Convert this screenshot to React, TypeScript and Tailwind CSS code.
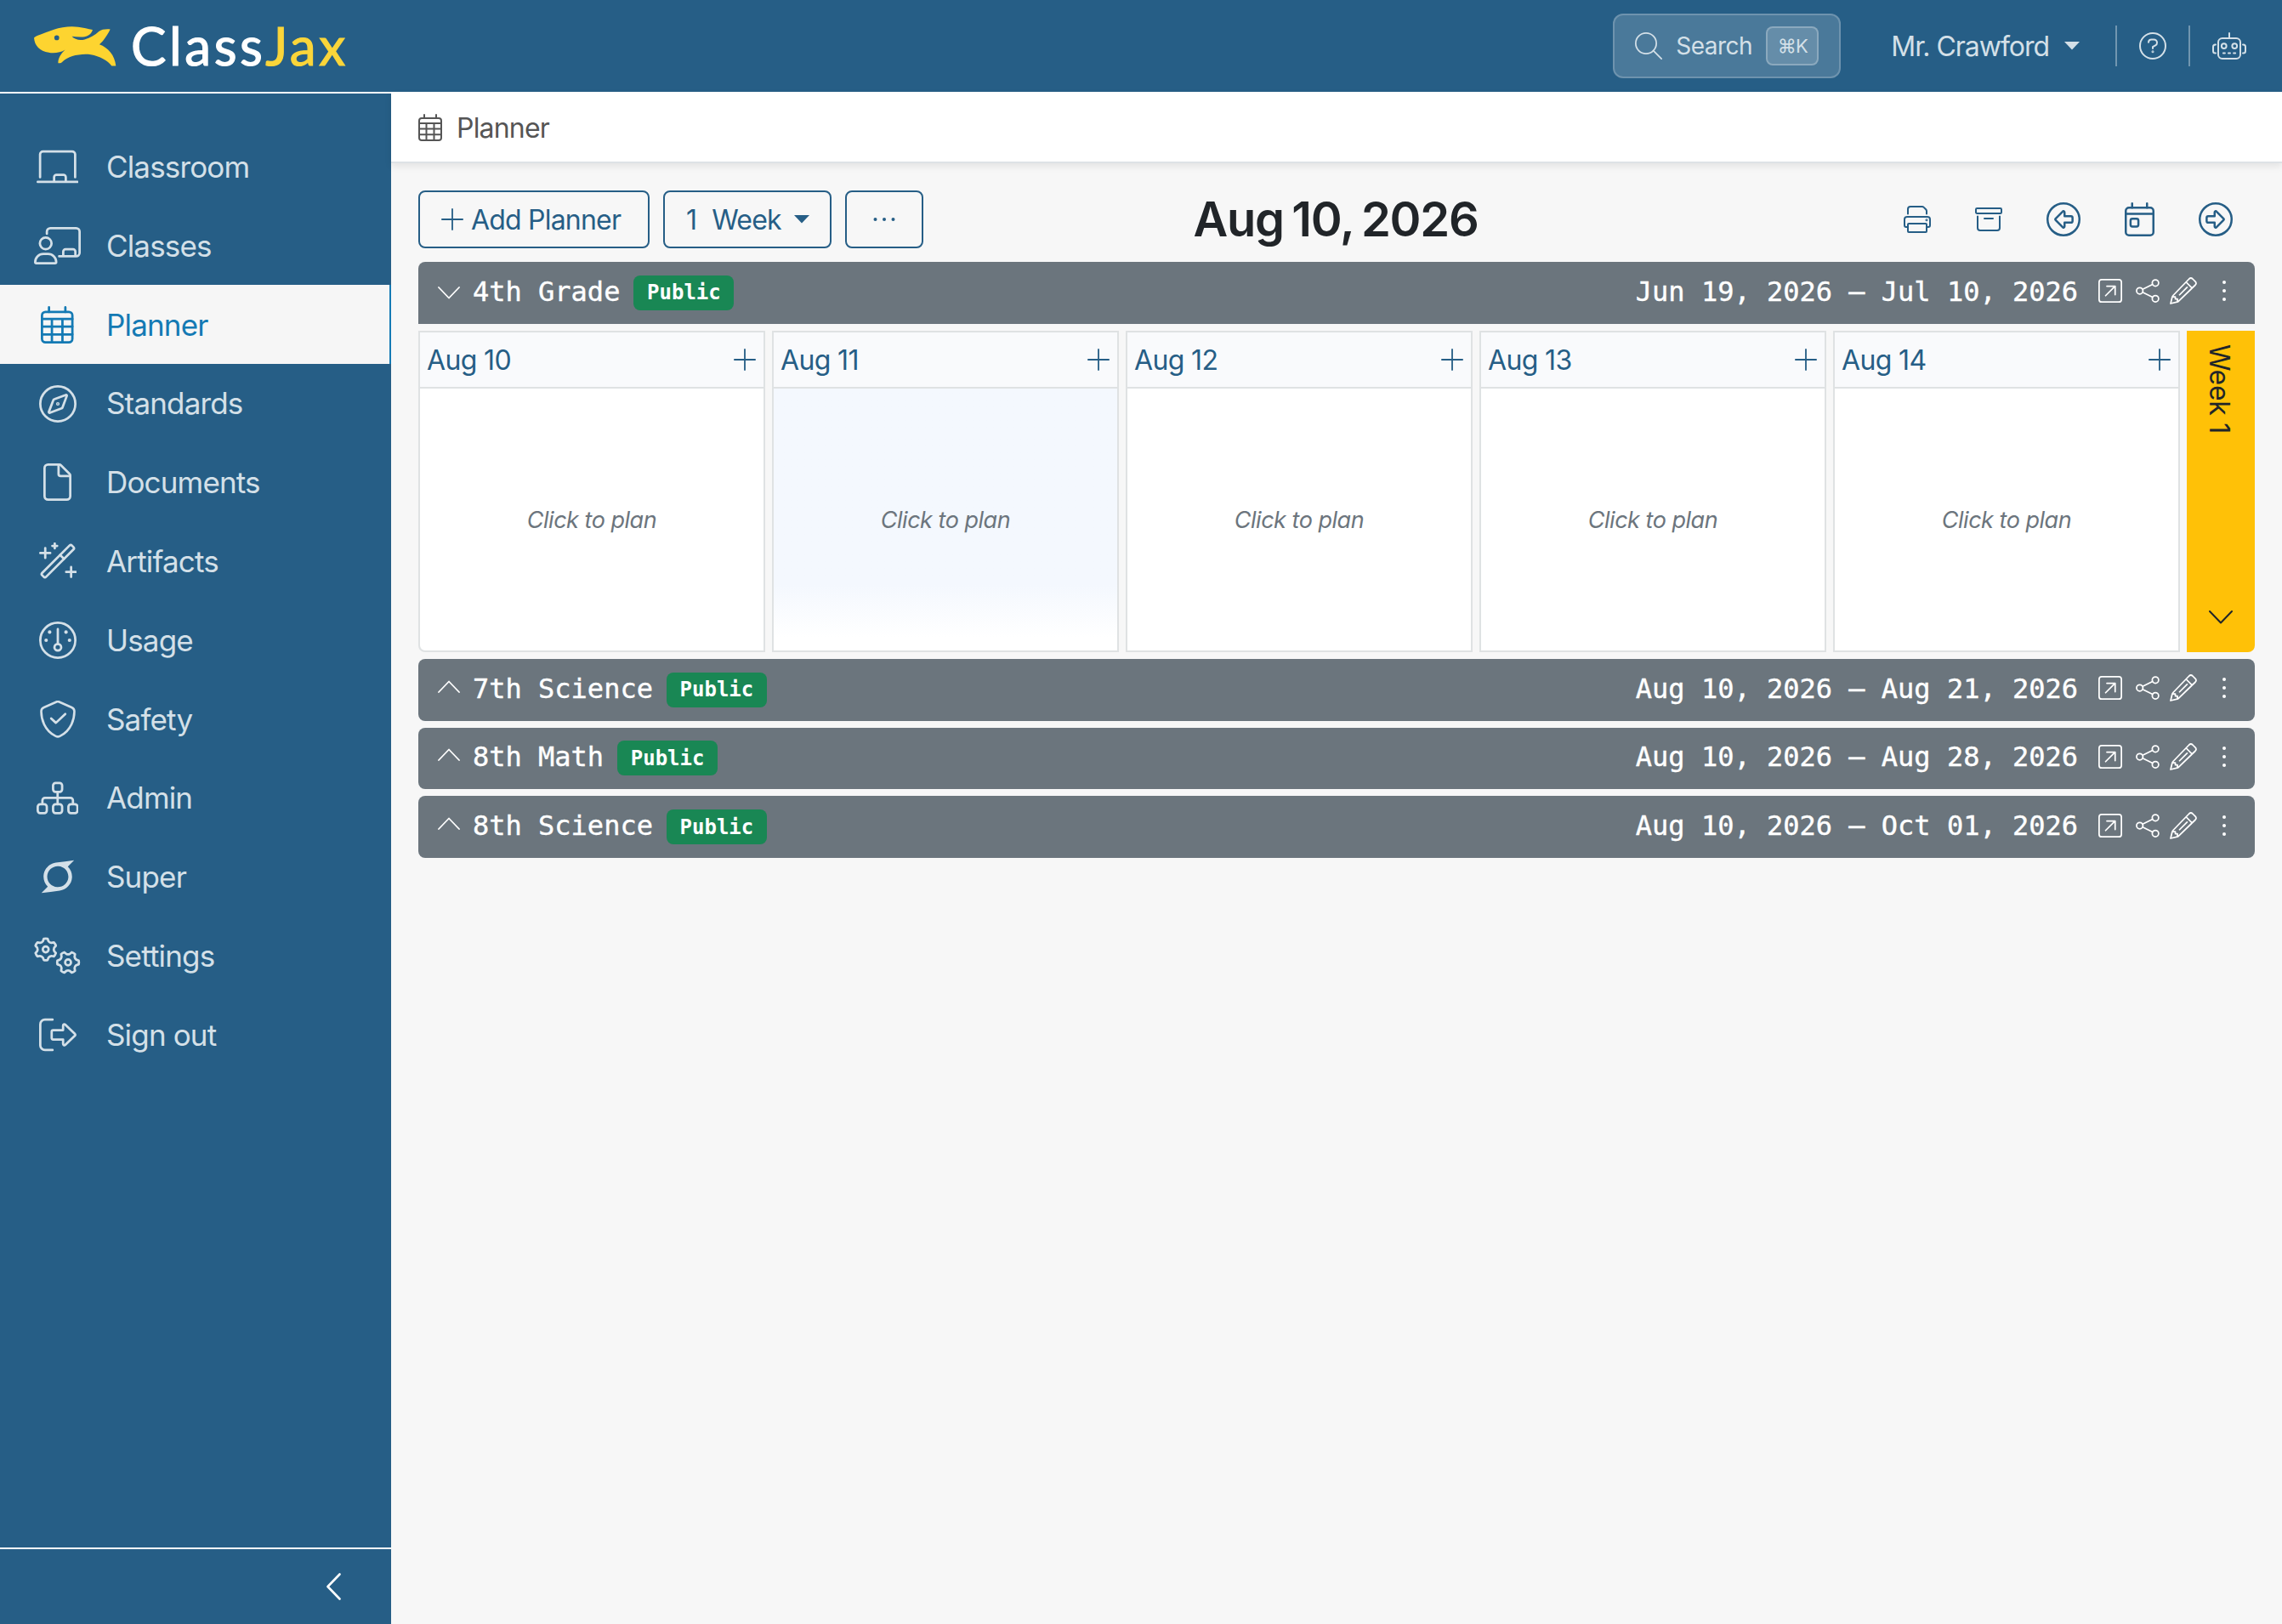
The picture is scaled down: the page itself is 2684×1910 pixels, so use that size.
import type { ReactNode } from "react";
import { FaSuperpowers } from "react-icons/fa";

type IconProps = {
  w?: number;
  h?: number;
  stroke?: number;
  className?: string;
  children: ReactNode;
};

function Icon({ w = 512, h = 512, stroke = 32, className, children }: IconProps) {
  return (
    <svg
      viewBox={`0 0 ${w} ${h}`}
      className={className}
      fill="none"
      stroke="currentColor"
      strokeWidth={stroke}
      strokeLinecap="round"
      strokeLinejoin="round"
    >
      {children}
    </svg>
  );
}

// six toothed gear outline around cx, cy
function gearPath(cx: number, cy: number, start: number) {
  const at = (r: number, deg: number) => {
    const a = (deg * Math.PI) / 180;
    return `${(cx + r * Math.cos(a)).toFixed(1)} ${(cy + r * Math.sin(a)).toFixed(1)}`;
  };
  let d = "";
  for (let i = 0; i < 6; i++) {
    const a = start + i * 60;
    d += `${i === 0 ? "M" : "L"}${at(148, a - 10)}`;
    d += `Q${at(152, a)} ${at(148, a + 10)}`;
    d += `L${at(118, a + 19)}`;
    d += `Q${at(106, a + 30)} ${at(118, a + 41)}`;
  }
  return d + "Z";
}

const CalendarDays = ({ className }: { className: string }) => (
  <Icon w={448} className={className}>
    <rect x="16" y="80" width="416" height="416" rx="48" />
    <path d="M112 16V80M336 16V80M16 176H432M16 280H432M16 388H432M152 176V496M296 176V496" />
  </Icon>
);

const Plus = ({ className }: { className: string }) => (
  <Icon w={400} h={400} stroke={28} className={className}>
    <path d="M200 14V386M14 200H386" />
  </Icon>
);

const Caret = ({ className }: { className: string }) => (
  <svg viewBox="0 0 18 10" className={className} fill="currentColor">
    <path d="M0 0H18L9 9.5Z" />
  </svg>
);

const navItems = [
  {
    label: "Classroom",
    icon: (
      <Icon w={576} className="h-11">
        <path d="M48 400V88a40 40 0 0 1 40-40H488a40 40 0 0 1 40 40V400M16 464H560M240 464V400a32 32 0 0 1 32-32H368a32 32 0 0 1 32 32V464" />
      </Icon>
    ),
  },
  {
    label: "Classes",
    icon: (
      <Icon w={640} className="h-11">
        <circle cx="160" cy="224" r="80" />
        <path d="M16 480c0-62 50-112 112-112h64c62 0 112 50 112 112a16 16 0 0 1-16 16H32a16 16 0 0 1-16-16z" />
        <path d="M176 92V64a48 48 0 0 1 48-48H576a48 48 0 0 1 48 48V352a48 48 0 0 1-48 48H344M400 400V336a32 32 0 0 1 32-32H534a32 32 0 0 1 32 32V400" />
      </Icon>
    ),
  },
  { label: "Planner", icon: <CalendarDays className="h-11" /> },
  {
    label: "Standards",
    icon: (
      <Icon className="h-11">
        <circle cx="256" cy="256" r="240" />
        <path d="M194 206a20 20 0 0 1 14-14L366 134a10 10 0 0 1 13 13L320 306a20 20 0 0 1-12 12L146 378a10 10 0 0 1-13-13z" />
        <circle cx="256" cy="256" r="8" />
      </Icon>
    ),
  },
  {
    label: "Documents",
    icon: (
      <Icon w={384} className="h-11">
        <path d="M320 496H64a48 48 0 0 1-48-48V64a48 48 0 0 1 48-48H218a32 32 0 0 1 23 9L358 142a32 32 0 0 1 10 23V448a48 48 0 0 1-48 48z" />
        <path d="M208 20V144a28 28 0 0 0 28 28H364" />
      </Icon>
    ),
  },
  {
    label: "Artifacts",
    icon: (
      <Icon className="h-11">
        <g transform="rotate(-45 256 256)">
          <rect x="-32" y="218" width="576" height="76" rx="24" />
          <path d="M338 218V294" />
        </g>
        <path d="M84 76V212M16 144H152M214 14V80M181 47H247M438 336V472M370 404H506" />
      </Icon>
    ),
  },
  {
    label: "Usage",
    icon: (
      <Icon className="h-11">
        <circle cx="256" cy="256" r="240" />
        <circle cx="256" cy="352" r="46" />
        <path d="M256 104V304" />
        <g fill="currentColor" stroke="none">
          <circle cx="144" cy="144" r="24" />
          <circle cx="368" cy="144" r="24" />
          <circle cx="96" cy="256" r="24" />
          <circle cx="416" cy="256" r="24" />
        </g>
      </Icon>
    ),
  },
  {
    label: "Safety",
    icon: (
      <Icon className="h-11">
        <path
          d="M243 19a32 32 0 0 1 26 0L457 99c22 9 39 30 39 56-1 99-41 263-206 341a72 72 0 0 1-68 0C57 418 17 254 16 155c0-26 17-47 39-56z"
          transform="translate(14 -4) scale(.945 .985)"
        />
        <path d="M165 244L230 304L358 182" />
      </Icon>
    ),
  },
  {
    label: "Admin",
    icon: (
      <Icon w={576} className="h-11">
        <rect x="226" y="44" width="124" height="122" rx="34" />
        <rect x="16" y="335" width="124" height="122" rx="34" />
        <rect x="226" y="335" width="124" height="122" rx="34" />
        <rect x="436" y="335" width="124" height="122" rx="34" />
        <path d="M288 166V335M80 330V282a34 34 0 0 1 34-34H464a34 34 0 0 1 34 34V330" />
      </Icon>
    ),
  },
  { label: "Super", icon: <FaSuperpowers className="h-11 w-11" /> },
  {
    label: "Settings",
    icon: (
      <Icon w={640} className="h-11">
        <path d={gearPath(160, 170, 30)} />
        <circle cx="160" cy="170" r="40" />
        <path d={gearPath(466, 348, 0)} />
        <circle cx="466" cy="348" r="40" />
      </Icon>
    ),
  },
  {
    label: "Sign out",
    icon: (
      <Icon className="h-11">
        <path d="M184 48H80a64 64 0 0 0-64 64V400a64 64 0 0 0 64 64H184" />
        <path d="M192 192H328V130c0-16 18-24 29-14L490 244a16 16 0 0 1 0 24L357 396c-11 10-29 2-29-14V320H192a20 20 0 0 1-20-20V212a20 20 0 0 1 20-20z" />
      </Icon>
    ),
  },
];

const days = ["Aug 10", "Aug 11", "Aug 12", "Aug 13", "Aug 14"];

const planners = [
  { name: "4th Grade", dates: "Jun 19, 2026 – Jul 10, 2026", open: true },
  { name: "7th Science", dates: "Aug 10, 2026 – Aug 21, 2026", open: false },
  { name: "8th Math", dates: "Aug 10, 2026 – Aug 28, 2026", open: false },
  { name: "8th Science", dates: "Aug 10, 2026 – Oct 01, 2026", open: false },
];

function Logo() {
  return (
    <div className="flex items-center">
      <svg viewBox="120 92 290 140" className="h-[47px] w-[97px]">
        <path
          fill="#fdd430"
          d="M120 132C124 126 150 118 190 103C215 94 250 90 275 94C295 97 310 100 326 104C322 120 308 128 292 129C278 130 265 128 253 127C262 138 280 142 298 138C318 133 335 122 348 110C358 102 372 101 388 102C382 114 374 128 362 143L350 155C380 166 404 192 408 231L393 231C380 212 350 196 320 191C280 186 240 198 222 214C215 221 211 222 205 221C204 206 213 190 229 174C215 184 190 188 172 184C140 178 122 160 120 132Z"
        />
        <circle cx="200" cy="132" r="8.5" fill="#265e86" />
      </svg>
      <span className="mb-[3px] ml-[17px] font-[Lato] text-[62px] leading-none tracking-[0.058em] text-white [-webkit-text-stroke:1.2px_currentColor]">
        Class<span className="text-[#fad53a]">Jax</span>
      </span>
    </div>
  );
}

function Header() {
  return (
    <header className="flex h-[108px] shrink-0 items-center bg-[#265e86] pl-10 text-[#d4e0e8]">
      <Logo />
      <button className="ml-auto flex h-[76px] w-[268px] items-center rounded-xl border-2 border-white/20 bg-white/17 pl-6">
        <Icon stroke={28} className="h-8 w-8">
          <circle cx="208" cy="208" r="194" />
          <path d="M346 346L498 498" />
        </Icon>
        <span className="ml-4 text-[28px] tracking-[-0.02em]">Search</span>
        <kbd className="ml-auto mr-6 flex h-[46px] w-[62px] items-center justify-center rounded-lg border-2 border-white/25 bg-white/15 font-[Inter] text-[22px] tracking-[-0.04em]">
          ⌘K
        </kbd>
      </button>
      <button className="ml-[59px] flex items-center text-[32px] tracking-[-0.032em]">
        <span className="pt-0.5">Mr. Crawford</span>
        <Caret className="ml-[18px] w-[18px]" />
      </button>
      <div className="ml-[42px] h-12 w-0.5 bg-white/35" />
      <Icon className="ml-[26px] h-8 w-8">
        <circle cx="256" cy="256" r="240" />
        <path d="M176 188c2-30 26-52 56-52h44c34 0 60 26 60 58 0 22-11 42-30 52l-50 28v28" />
        <circle cx="256" cy="362" r="8" />
      </Icon>
      <div className="ml-[26px] h-12 w-0.5 bg-white/35" />
      <Icon w={640} className="ml-[26px] mr-[42px] h-8 w-10">
        <path d="M320 16V112M64 232h-8a40 40 0 0 0-40 40V352a40 40 0 0 0 40 40h8M576 232h8a40 40 0 0 1 40 40V352a40 40 0 0 1-40 40h-8M206 392h32M304 392h32M402 392h32" />
        <rect x="112" y="112" width="416" height="384" rx="76" />
        <circle cx="220" cy="256" r="46" />
        <circle cx="420" cy="256" r="46" />
      </Icon>
    </header>
  );
}

function Sidebar() {
  return (
    <aside className="flex w-[460px] shrink-0 flex-col border-t-2 border-white bg-[#265e86]">
      <nav className="pt-[39.9px]">
        {navItems.map((item) => {
          const active = item.label === "Planner";
          return (
            <a
              key={item.label}
              className={`flex h-[92.8px] items-center pl-10 text-[35px] tracking-[-0.024em] ${
                active
                  ? "border-r-2 border-[#147ab4] bg-[#f6f6f6] text-[#147ab4]"
                  : "text-[#d4e0e8]"
              }`}
            >
              <span className="flex w-[55px] justify-center">{item.icon}</span>
              <span className="ml-[30px]">{item.label}</span>
            </a>
          );
        })}
      </nav>
      <div className="mt-auto flex h-[90px] items-center justify-end border-t-2 border-white pr-[59px] text-white">
        <Icon w={17} h={32} stroke={2.6} className="h-8 w-[17px]">
          <path d="M15.5 1.5L1.5 16L15.5 30.5" />
        </Icon>
      </div>
    </aside>
  );
}

function Toolbar() {
  return (
    <div className="grid h-[68px] grid-cols-[1fr_auto_1fr] items-center text-[#265e86]">
      <div className="flex gap-4 text-[32px] tracking-[-0.025em]">
        <button className="flex h-[68px] w-[272px] items-center rounded-lg border-2 border-[#265e86] pl-[25px]">
          <Plus className="h-[26px] w-[26px]" />
          <span className="ml-[9px] pt-0.5 whitespace-nowrap">Add Planner</span>
        </button>
        <button className="flex h-[68px] w-[198px] items-center rounded-lg border-2 border-[#265e86] pl-[25px]">
          <span className="pt-0.5">1</span>
          <span className="ml-[18px] pt-0.5">Week</span>
          <Caret className="ml-[15px] w-[18px]" />
        </button>
        <button className="flex h-[68px] w-[92px] items-center justify-center rounded-lg border-2 border-[#265e86]">
          <svg viewBox="0 0 26 4" className="w-[26px]" fill="currentColor">
            <circle cx="2.5" cy="2" r="2" />
            <circle cx="13" cy="2" r="2" />
            <circle cx="23.5" cy="2" r="2" />
          </svg>
        </button>
      </div>
      <h1 className="pr-0.5 text-[56px] leading-none font-[580] tracking-[-0.022em] text-[#212529] [word-spacing:-0.06em]">
        Aug 10, 2026
      </h1>
      <div className="flex items-center justify-end gap-[52px] pr-[26px]">
        <Icon className="h-8 w-8">
          <path d="M80 150V64a48 48 0 0 1 48-48H346a48 48 0 0 1 34 14L418 68a48 48 0 0 1 14 34V150M80 400H48a32 32 0 0 1-32-32V256a48 48 0 0 1 48-48H448a48 48 0 0 1 48 48V368a32 32 0 0 1-32 32H432" />
          <rect x="80" y="336" width="352" height="160" rx="16" />
          <circle cx="432" cy="268" r="8" />
        </Icon>
        <Icon className="h-8 w-8">
          <rect x="16" y="48" width="480" height="96" rx="20" />
          <path d="M48 200V416a48 48 0 0 0 48 48H416a48 48 0 0 0 48-48V200M176 240H336" />
        </Icon>
        <Icon className="h-10 w-10">
          <circle cx="256" cy="256" r="240" />
          <path d="M368 208H272V150c0-16-18-24-29-12L138 245a16 16 0 0 0 0 22L243 374c11 12 29 4 29-12V304H368a24 24 0 0 0 24-24V232a24 24 0 0 0-24-24z" />
        </Icon>
        <Icon w={448} className="h-10 w-[35px]">
          <rect x="16" y="80" width="416" height="416" rx="48" />
          <path d="M112 16V80M336 16V80M16 174H432" />
          <rect x="88" y="246" width="118" height="118" rx="28" />
        </Icon>
        <Icon className="h-10 w-10">
          <circle cx="256" cy="256" r="240" />
          <path d="M144 208H240V150c0-16 18-24 29-12L374 245a16 16 0 0 1 0 22L269 374c-11 12-29 4-29-12V304H144a24 24 0 0 1-24-24V232a24 24 0 0 1 24-24z" />
        </Icon>
      </div>
    </div>
  );
}

function PlannerBar({ name, dates, open }: (typeof planners)[number]) {
  return (
    <div
      className={`flex h-[72.8px] items-center bg-[#6b757d] pl-[23px] pr-[34px] font-['DejaVu_Sans_Mono'] text-[32px] text-white ${
        open ? "rounded-t-lg" : "rounded-lg"
      }`}
    >
      <Icon w={26} h={15} stroke={1.8} className={`w-[26px] ${open ? "" : "mb-2"}`}>
        <path d={open ? "M1 1L13 13.5L25 1" : "M1 14L13 1.5L25 14"} />
      </Icon>
      <span className="mb-[3px] ml-[15px] [-webkit-text-stroke:0.4px_currentColor]">{name}</span>
      <span className="ml-4 flex h-[41px] w-[118px] items-center justify-center rounded-lg bg-[#198754] text-[24px] font-bold">
        Public
      </span>
      <span className="mb-[3px] ml-auto [-webkit-text-stroke:0.4px_currentColor]">{dates}</span>
      <div className="mb-1 ml-6 flex items-center">
        <Icon w={448} h={448} stroke={28} className="h-7 w-7">
          <rect x="14" y="14" width="420" height="420" rx="48" />
          <path d="M136 316L314 138M160 136H316V296" />
        </Icon>
        <Icon w={448} h={448} stroke={28} className="ml-4 h-7 w-7">
          <circle cx="75" cy="224" r="60" />
          <circle cx="370" cy="76" r="60" />
          <circle cx="370" cy="372" r="60" />
          <path d="M129 197L316 103M129 251L316 345" />
        </Icon>
        <Icon stroke={28} className="ml-3 h-8 w-8">
          <path d="M16 496L46 372a48 48 0 0 1 13-24L364 32a48 48 0 0 1 66 0L480 82a48 48 0 0 1 0 66L164 453a48 48 0 0 1-24 13zM306 92L420 206M184 332L326 190M50 368H104V408H144V462" />
        </Icon>
        <svg viewBox="0 0 4 24" className="ml-[30px] h-6 w-1" fill="currentColor">
          <circle cx="2" cy="2" r="2" />
          <circle cx="2" cy="12" r="2" />
          <circle cx="2" cy="22" r="2" />
        </svg>
      </div>
    </div>
  );
}

function WeekRow() {
  return (
    <div className="flex h-[378px] gap-2">
      {days.map((day, i) => (
        <div
          key={day}
          className={`flex w-[408px] flex-col border-2 border-[#dfe2e3] bg-white ${
            i === 0 ? "rounded-bl-lg" : ""
          }`}
        >
          <div className="flex h-[66px] shrink-0 items-center justify-between border-b-2 border-[#dfe2e3] bg-[#f9fafc] pl-2 pr-[9px] text-[32px] tracking-[-0.02em] text-[#265e86]">
            <span className="pt-0.5">{day}</span>
            <Plus className="h-[26px] w-[26px]" />
          </div>
          <div
            className={`flex flex-1 items-center justify-center pt-[3px] text-[27px] tracking-[-0.018em] text-[#6c757d] italic ${
              i === 1 ? "bg-linear-to-b from-[#f4f8fe] from-75% to-white to-95%" : ""
            }`}
          >
            Click to plan
          </div>
        </div>
      ))}
      <div className="flex w-20 flex-col items-center justify-between rounded-br-lg bg-[#ffc107] pt-4 pb-[33px] text-[#212529]">
        <span className="mr-1 text-[32px] leading-none tracking-[-0.01em] [writing-mode:vertical-rl]">
          Week 1
        </span>
        <Icon w={28} h={16} stroke={2} className="w-7">
          <path d="M1 1L14 14.5L27 1" />
        </Icon>
      </div>
    </div>
  );
}

export default function App() {
  return (
    <div className="flex h-screen w-full flex-col bg-[#f7f7f7] font-[Inter,sans-serif]">
      <Header />
      <div className="flex flex-1">
        <Sidebar />
        <main className="flex-1">
          {/* page title strip */}
          <div className="flex h-[84px] items-center border-b-2 border-[#dee2e6] bg-white pl-8 text-[32px] tracking-[-0.025em] text-[#555] shadow-[0_4px_8px_rgba(0,0,0,0.08)]">
            <CalendarDays className="mt-0.5 h-8 w-7" />
            <span className="ml-[17px] pt-[3px]">Planner</span>
          </div>
          <div className="px-8 pt-8">
            <Toolbar />
            <div className="mt-4 flex flex-col gap-2">
              {planners.map((planner) => (
                <div key={planner.name} className="flex flex-col gap-2">
                  <PlannerBar {...planner} />
                  {planner.open && <WeekRow />}
                </div>
              ))}
            </div>
          </div>
        </main>
      </div>
    </div>
  );
}
